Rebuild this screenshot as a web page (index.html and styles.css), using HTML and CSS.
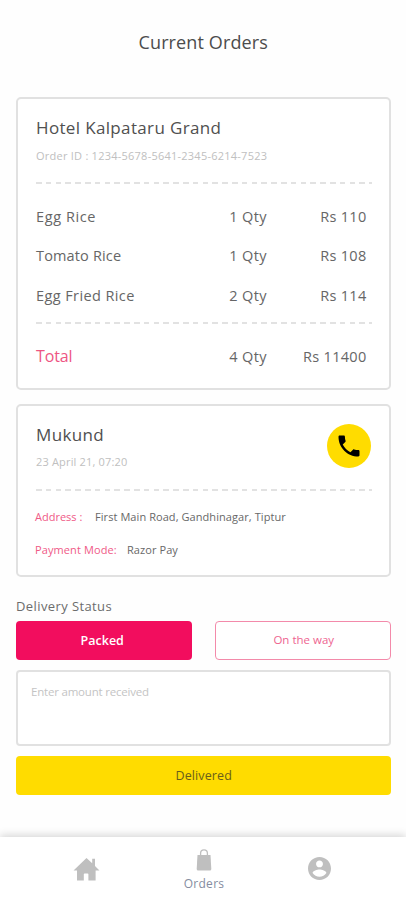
FILE: index.html
```html
<!DOCTYPE html>
<html lang="en">
<head>
<meta charset="utf-8">
<title>Current Orders</title>
<link rel="stylesheet" href="styles.css">
</head>
<body>
<main class="screen">
  <h1 class="title">Current Orders</h1>
  <section class="card order">
    <h2 class="name">Hotel Kalpataru Grand</h2>
    <p class="meta order-id">Order ID : 1234-5678-5641-2345-6214-7523</p>
    <div class="dash"></div>
    <div class="items">
      <div class="row"><span class="item egg">Egg Rice</span><span class="qty">1 Qty</span><span class="price">Rs 110</span></div>
      <div class="row"><span class="item tomato">Tomato Rice</span><span class="qty">1 Qty</span><span class="price">Rs 108</span></div>
      <div class="row"><span class="item fried">Egg Fried Rice</span><span class="qty">2 Qty</span><span class="price">Rs 114</span></div>
    </div>
    <div class="dash"></div>
    <div class="row total"><span class="item label">Total</span><span class="qty">4 Qty</span><span class="price">Rs 11400</span></div>
  </section>
  <section class="card customer">
    <div class="head">
      <div>
        <h2 class="name">Mukund</h2>
        <p class="meta date">23 April 21, 07:20</p>
      </div>
      <span class="call"><svg viewBox="0 0 24 24" width="28" height="28"><path d="M6.62 10.79c1.44 2.83 3.76 5.14 6.59 6.59l2.2-2.2c.27-.27.67-.36 1.02-.24 1.12.37 2.33.57 3.57.57.55 0 1 .45 1 1V20c0 .55-.45 1-1 1-9.39 0-17-7.61-17-17 0-.55.45-1 1-1h3.5c.55 0 1 .45 1 1 0 1.25.2 2.45.57 3.57.11.35.03.74-.25 1.02l-2.2 2.2z"/></svg></span>
    </div>
    <div class="dash"></div>
    <p class="detail address"><span class="key">Address :</span><span class="value">First Main Road, Gandhinagar, Tiptur</span></p>
    <p class="detail payment"><span class="key">Payment Mode:</span><span class="value">Razor Pay</span></p>
  </section>
  <h3 class="status">Delivery Status</h3>
  <div class="choices">
    <button class="btn packed">Packed</button>
    <button class="btn way">On the way</button>
  </div>
  <div class="amount">Enter amount received</div>
  <button class="btn delivered">Delivered</button>
</main>
<nav class="nav">
  <span class="tab home"><svg viewBox="0 0 27 24" width="27" height="24"><path d="M13.5 1 .5 13.500H4V23.500h6.800v-6.200q0-.8.8-.8h3q.8 0 .8.8v6.200h7.200V13.500h3.900L22 9V1.800h-2.800v4.400z"/></svg></span>
  <span class="tab orders"><svg viewBox="0 0 16 22" width="16" height="22"><path d="M1.500 6H14.500L15.300 20q0 1.500-1.500 1.500H2.200Q.7 21.500.7 20z"/><path class="handle" d="M4.600 7V4.300a3.400 3.400 0 0 1 6.800 0V7"/></svg><span class="tab-label">Orders</span></span>
  <span class="tab profile"><svg viewBox="2 2 20 20" width="23" height="23"><path d="M12 2C6.480 2 2 6.480 2 12s4.480 10 10 10 10-4.480 10-10S17.520 2 12 2zm0 3c1.660 0 3 1.340 3 3s-1.340 3-3 3-3-1.340-3-3 1.340-3 3-3zm0 14.200c-2.500 0-4.710-1.280-6-3.220.030-1.990 4-3.080 6-3.080 1.990 0 5.970 1.090 6 3.080-1.290 1.940-3.500 3.220-6 3.220z"/></svg></span>
</nav>
</body>
</html>
```
FILE: styles.css
```css
* { box-sizing: border-box; margin: 0; padding: 0; }
body {
  width: 406px; height: 900px; overflow: hidden;
  display: flex; flex-direction: column;
  background: #fefefe; color: #555;
  font-family: "Open Sans", "Noto Sans", sans-serif; font-weight: 400;
}
svg { display: block; }
.screen { height: 837px; padding: 0 15.500px 0 16px; display: flex; flex-direction: column; }
.title { margin-top: 30px; height: 24px; line-height: 24px; text-align: center; font-size: 18px; letter-spacing: .12px; font-weight: 400; color: #4c4c4c; }
.card { border: 2px solid #e1e1e1; border-radius: 5px; padding: 0 17px 0 18px; background: #fff; }
.order { margin-top: 43px; height: 293px; }
.name { font-size: 17px; line-height: 24px; letter-spacing: .35px; font-weight: 400; color: #505050; white-space: nowrap; }
.order .name { margin-top: 17px; }
.meta { font-size: 11px; line-height: 16px; letter-spacing: .24px; color: #c0c0c0; white-space: nowrap; }
.order-id { margin-top: 8px; }
.dash { height: 2px; background: repeating-linear-gradient(90deg, #e2e2e2 0 5.500px, transparent 5.500px 9.800px); }
.order .dash { margin-top: 18px; }
.items { margin-top: 13px; }
.row { display: grid; grid-template-columns: 170px 61px 1fr; height: 39.500px; align-items: center; font-size: 14.500px; line-height: 20px; letter-spacing: .4px; white-space: nowrap; color: #666; }
.egg { letter-spacing: .6px; }
.tomato { letter-spacing: .15px; }
.qty { text-align: right; }
.price { text-align: right; padding-right: 5px; letter-spacing: .3px; }
.order .items + .dash { margin-top: 6px; }
.total { margin-top: 14px; }
.total .label { font-size: 16px; letter-spacing: -.15px; color: #ee5583; padding-bottom: 3px; }
.customer { margin-top: 14px; height: 173px; }
.head { display: flex; justify-content: space-between; }
.customer .name { margin-top: 17px; }
.date { margin-top: 7px; letter-spacing: .17px; }
.call { width: 44px; height: 44px; margin: 18px 1px 0 0; border-radius: 50%; background: #ffdc00; display: flex; align-items: center; justify-content: center; }
.customer .dash { margin-top: 19px; }
.detail { display: flex; font-size: 11px; line-height: 17px; color: #686868; white-space: nowrap; }
.key { color: #ef5a87; flex: none; margin-left: -1px; }
.value { letter-spacing: .07px; }
.address { margin-top: 17px; }
.address .key { width: 60px; }
.payment { margin-top: 16px; }
.payment .key { width: 92px; letter-spacing: .1px; }
.status { margin-top: 20px; font-size: 13px; line-height: 18px; letter-spacing: .4px; font-weight: 400; color: #6c6c6c; white-space: nowrap; }
.choices { margin-top: 6px; display: grid; grid-template-columns: 175.500px 175.500px; justify-content: space-between; }
.btn { height: 39px; border: 0; border-radius: 4px; font: inherit; font-size: 12px; line-height: 18px; }
.packed { background: #f20d5e; color: #fff; font-weight: 600; font-size: 12.500px; padding-right: 3px; }
.way { background: #fff; border: 1px solid #f38aaa; color: #ee6490; font-size: 11.500px; padding: 0 0 2px 2px; }
.amount { margin-top: 10px; height: 76px; border: 2px solid #e1e1e1; border-radius: 4px; padding: 11px 13px; font-size: 11.500px; line-height: 17px; letter-spacing: -.2px; color: #c4c4c4; background: #fff; }
.delivered { margin-top: 10px; background: #ffdc00; color: #685e1c; font-size: 12.500px; letter-spacing: .12px; padding-left: 1px; }
.nav { height: 63px; background: #fff; box-shadow: 0 -2px 8px rgba(0,0,0,.16); display: grid; grid-template-columns: 117px 117px 117px; justify-content: center; fill: #bfbfbf; }
.tab { display: flex; flex-direction: column; align-items: center; }
.home { padding-top: 20px; }
.orders { padding: 12px 0 0 2px; }
.profile { padding: 20px 2px 0 0; }
.handle { fill: none; stroke: #bfbfbf; stroke-width: 1.300; }
.tab-label { margin-top: 4px; font-size: 12px; line-height: 17px; letter-spacing: .3px; color: #858da0; }
```
